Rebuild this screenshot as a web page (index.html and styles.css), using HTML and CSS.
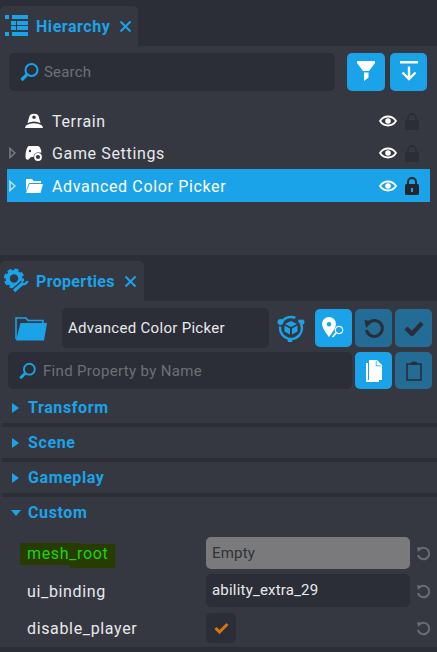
FILE: index.html
```html
<!DOCTYPE html>
<html>
<head>
	<title>Hierarchy and Properties</title>
	<link rel="stylesheet" href="styles.css">
</head>
<body>
	<div class="tab hier-tab">
		<svg class="tab-icon" width="28" height="24" viewBox="0 0 28 24">
			<path fill="#1aa3e8" d="M5 1h4v4H5zM5 18h4v4H5zM12 1h16v4H12zM11 7h5v4h-5zM17 7h11v4H17zM11 12h5v4h-5zM17 12h11v4H17zM12 18h16v4H12z"/>
		</svg>
		<span class="tab-title">Hierarchy</span>
		<svg class="tab-close" width="13" height="13" viewBox="0 0 13 13"><path d="M1.500 1.500l10 10M11.500 1.500l-10 10" stroke="#1aa3e8" stroke-width="2" fill="none"/></svg>
	</div>
	<div class="panel hier-panel">
		<div class="search-row">
			<div class="search">
				<svg width="22" height="22" viewBox="0 0 22 22"><circle cx="12.500" cy="9" r="6" stroke="#1aa3e8" stroke-width="2" fill="none"/><path d="M8 13.500L2.500 19" stroke="#1aa3e8" stroke-width="3.200"/></svg>
				<span>Search</span>
			</div>
			<div class="btn-pair">
				<div class="btn">
					<svg width="20" height="24" viewBox="0 0 20 24"><path fill="#fff" d="M1 1h18v2l-6 8H7L1 3z"/><path fill="#fff" d="M8 12.500h4.500l0 5L8 21z"/></svg>
				</div>
				<div class="btn">
					<svg width="20" height="24" viewBox="0 0 20 24"><path fill="#fff" d="M1 1h18v2.500H1z"/><path d="M10 6.500V19M3.500 12.500L10 19l6.500-6.500" stroke="#fff" stroke-width="2.400" fill="none"/></svg>
				</div>
			</div>
		</div>
		<div class="tree">
			<div class="row">
				<span class="arrow"></span>
				<svg class="row-icon" width="18" height="16" viewBox="0 0 18 16"><path fill="#fff" fill-rule="evenodd" d="M2.500 10L4.500 3C5.500 0 12.500 0 13.500 3l2 7C11 8 7 8 2.500 10zM9 2.500a1.800 1.800 0 1 0 0 3.600 1.800 1.800 0 0 0 0-3.600z"/><path fill="#fff" d="M1 12.500C6 9.500 12 9.500 17 12.500l1 2.500H0z"/></svg>
				<span class="row-name">Terrain</span>
				<svg class="eye" width="18" height="12" viewBox="0 0 18 12"><path d="M1 6c4-6 12-6 16 0-4 6-12 6-16 0z" fill="none" stroke="#fff" stroke-width="1.800"/><circle cx="9" cy="6" r="2.800" fill="#fff"/></svg>
				<svg class="lock" width="14" height="17" viewBox="0 0 14 17"><path d="M3 8V5a4 4 0 0 1 8 0v3" fill="none" stroke="#2b2e36" stroke-width="2"/><rect y="7" width="14" height="10" rx="1.500" fill="#2b2e36"/></svg>
			</div>
			<div class="row">
				<svg class="arrow-open" width="7" height="12" viewBox="0 0 7 12"><path d="M1 1.500L6 6l-5 4.500z" fill="none" stroke="#7b7e85" stroke-width="1.500"/></svg>
				<svg class="row-icon" width="18" height="16" viewBox="0 0 18 16"><path fill="#fff" d="M4 1h8.500c2 0 3.500 2.500 4 6.500L12 8l-2 4H6l-2.500 2.500C1.500 15 .5 14 .5 11.500.5 7 2 1 4 1z"/><circle cx="13" cy="12" r="4.500" fill="#353841"/><circle cx="13" cy="12" r="3" fill="none" stroke="#fff" stroke-width="1.800"/><circle cx="5" cy="6" r="1.200" fill="#353841"/></svg>
				<span class="row-name">Game Settings</span>
				<svg class="eye" width="18" height="12" viewBox="0 0 18 12"><path d="M1 6c4-6 12-6 16 0-4 6-12 6-16 0z" fill="none" stroke="#fff" stroke-width="1.800"/><circle cx="9" cy="6" r="2.800" fill="#fff"/></svg>
				<svg class="lock" width="14" height="17" viewBox="0 0 14 17"><path d="M3 8V5a4 4 0 0 1 8 0v3" fill="none" stroke="#2b2e36" stroke-width="2"/><rect y="7" width="14" height="10" rx="1.500" fill="#2b2e36"/></svg>
			</div>
			<div class="row selected">
				<svg class="arrow-open" width="7" height="12" viewBox="0 0 7 12"><path d="M1 1.500L6 6l-5 4.500z" fill="none" stroke="#bfe4f8" stroke-width="1.500"/></svg>
				<svg class="row-icon" width="18" height="14" viewBox="0 0 18 14"><path fill="#fff" d="M1 0h6l1.500 2H16v2H4L1 12z"/><path fill="#fff" d="M4.500 5H18l-2.500 9H1z"/></svg>
				<span class="row-name">Advanced Color Picker</span>
				<svg class="eye" width="18" height="12" viewBox="0 0 18 12"><path d="M1 6c4-6 12-6 16 0-4 6-12 6-16 0z" fill="none" stroke="#fff" stroke-width="1.800"/><circle cx="9" cy="6" r="2.800" fill="#fff"/></svg>
				<svg class="lock" width="14" height="18" viewBox="0 0 14 18"><path d="M3 8V5a4 4 0 0 1 8 0v3" fill="none" stroke="#23262d" stroke-width="2"/><rect y="7" width="14" height="11" rx="1.500" fill="#23262d"/><rect x="6" y="11" width="2" height="4" fill="#1aa3e8"/></svg>
			</div>
		</div>
	</div>

	<div class="tab prop-tab">
		<svg class="tab-icon" width="26" height="26" viewBox="0 0 26 26">
			<circle cx="10" cy="10.500" r="6.300" fill="none" stroke="#1aa3e8" stroke-width="4.200"/>
			<circle cx="10" cy="10.500" r="8.800" fill="none" stroke="#1aa3e8" stroke-width="2.600" stroke-dasharray="4.300 2.610"/>
			<path d="M9 24L19 15" stroke="#353841" stroke-width="6"/>
			<path d="M10 23L19 15" stroke="#1aa3e8" stroke-width="3.200"/>
			<path d="M17.500 15.500a4 4 0 0 0 6-2.500" stroke="#1aa3e8" stroke-width="2.400" fill="none"/>
		</svg>
		<span class="tab-title">Properties</span>
		<svg class="tab-close" width="13" height="13" viewBox="0 0 13 13"><path d="M1.500 1.500l10 10M11.500 1.500l-10 10" stroke="#1aa3e8" stroke-width="2" fill="none"/></svg>
	</div>
	<div class="panel prop-panel">
		<div class="name-row">
			<svg class="big-folder" width="33" height="25" viewBox="0 0 33 25"><path d="M1 23V2h10l2 2.500h15V7" fill="none" stroke="#1aa3e8" stroke-width="1.600"/><path fill="#1aa3e8" d="M5.500 7H32l-3 17.500H1z"/></svg>
			<div class="name-field">Advanced Color Picker</div>
			<svg class="cube" width="28" height="28" viewBox="0 0 28 28">
				<circle cx="14" cy="14" r="11" fill="none" stroke="#1aa3e8" stroke-width="2.400" stroke-dasharray="16 4"/>
				<circle cx="3.500" cy="8" r="3" fill="#1aa3e8"/><circle cx="25" cy="8" r="2.500" fill="#1aa3e8"/><circle cx="13" cy="26" r="2.500" fill="#1aa3e8"/>
				<path fill="#1aa3e8" d="M14 7l6 3-6 3-6-3zM7.500 11.500l5.500 3v6l-5.500-3zM20.500 11.500l-5.500 3v6l5.500-3z"/>
			</svg>
			<div class="btn">
				<svg width="28" height="26" viewBox="0 0 28 26"><path fill="#fff" fill-rule="evenodd" d="M9 2a7 7 0 0 1 7 7c0 4.500-7 13-7 13S2 13.500 2 9a7 7 0 0 1 7-7zm0 5a2.200 2.200 0 1 0 0 4.400A2.200 2.200 0 0 0 9 7z"/><circle cx="19" cy="15" r="3.700" fill="#1aa3e8" stroke="#fff" stroke-width="1.300"/><path d="M16 18l-3.500 4" stroke="#fff" stroke-width="1.600"/></svg>
			</div>
			<div class="btn off">
				<svg width="22" height="22" viewBox="0 0 22 22"><path d="M5 6.500A8 8 0 1 1 3.500 13" fill="none" stroke="#2b2e36" stroke-width="3"/><path fill="#2b2e36" d="M1.500 3l8 1.500L3 11z"/></svg>
			</div>
			<div class="btn off">
				<svg width="20" height="16" viewBox="0 0 20 16"><path d="M2 8l6 6L18 3" fill="none" stroke="#2b2e36" stroke-width="4.400"/></svg>
			</div>
		</div>
		<div class="find-row">
			<div class="search find">
				<svg width="20" height="20" viewBox="0 0 22 22"><circle cx="12.500" cy="9" r="6" stroke="#1aa3e8" stroke-width="2" fill="none"/><path d="M8 13.500L2.500 19" stroke="#1aa3e8" stroke-width="3.200"/></svg>
				<span>Find Property by Name</span>
			</div>
			<div class="btn">
				<svg width="18" height="22" viewBox="0 0 18 22"><path fill="#fff" d="M1 3h2v17h11v2H1z"/><path fill="#fff" d="M4 0h8l5 5v15H4z"/><path fill="#1aa3e8" d="M11.500 1l0 4.500H16v.7h-5.200V1z"/></svg>
			</div>
			<div class="btn off">
				<svg width="16" height="20" viewBox="0 0 16 20"><rect x="1" y="3" width="14" height="16" fill="none" stroke="#2b2e36" stroke-width="1.600"/><path fill="#2b2e36" d="M5 1h2l1-1 1 1h2v3H5z"/></svg>
			</div>
		</div>
		<div class="section"><span class="tri"></span>Transform</div>
		<div class="section"><span class="tri"></span>Scene</div>
		<div class="section"><span class="tri"></span>Gameplay</div>
		<div class="section open"><span class="tri down"></span>Custom</div>
		<div class="prop first">
			<div class="prop-label"><span class="mesh">mesh_root</span></div>
			<div class="value empty">Empty</div>
			<svg class="reset" width="15" height="15" viewBox="0 0 15 15"><path d="M3.500 3.500A5.700 5.700 0 1 1 2 9" fill="none" stroke="#6a6d75" stroke-width="2"/><path fill="#6a6d75" d="M1 1l5 1-4 4z"/></svg>
		</div>
		<div class="prop">
			<div class="prop-label">ui_binding</div>
			<div class="value">ability_extra_29</div>
			<svg class="reset" width="15" height="15" viewBox="0 0 15 15"><path d="M3.500 3.500A5.700 5.700 0 1 1 2 9" fill="none" stroke="#6a6d75" stroke-width="2"/><path fill="#6a6d75" d="M1 1l5 1-4 4z"/></svg>
		</div>
		<div class="prop">
			<div class="prop-label">disable_player</div>
			<div class="check-cell">
				<div class="check"><svg width="15" height="12" viewBox="0 0 15 12"><path d="M1.500 6l4 4L13.500 2" fill="none" stroke="#d9730f" stroke-width="3"/></svg></div>
			</div>
			<svg class="reset" width="15" height="15" viewBox="0 0 15 15"><path d="M3.500 3.500A5.700 5.700 0 1 1 2 9" fill="none" stroke="#6a6d75" stroke-width="2"/><path fill="#6a6d75" d="M1 1l5 1-4 4z"/></svg>
		</div>
	</div>
</body>
</html>
```
FILE: styles.css
```css
* { box-sizing: border-box; }
body { margin: 0; height: 652px; overflow: hidden; background: #2b2e36; font-family: Roboto, sans-serif; color: #e8e9eb; }

.tab { display: flex; align-items: center; height: 40px; margin-top: 6px; background: #353841; border-radius: 5px 5px 0 0; }
.hier-tab { width: 138px; }
.prop-tab { width: 144px; }
.tab-icon { flex: none; }
.tab-title { font-size: 16px; font-weight: 700; letter-spacing: 0.55px; color: #1aa3e8; margin-left: 8px; }
.tab-close { margin-left: 9px; }
.prop-tab .tab-icon { margin-left: 4px; }
.prop-tab .tab-title { margin-left: 6px; letter-spacing: 0.35px; }

.panel { background: #353841; }
.hier-panel { height: 209px; padding-top: 7px; }
.prop-panel { height: 346px; padding-top: 7px; }

.search-row { display: flex; padding: 0 10px 0 9px; gap: 12px; }
.search { flex: 1; display: flex; align-items: center; height: 38px; background: #2b2e36; border-radius: 5px; padding-left: 10px; gap: 3px; font-size: 15px; letter-spacing: 0.2px; color: #6e7076; }
.btn-pair { display: flex; gap: 5px; }
.btn { flex: none; display: flex; align-items: center; justify-content: center; width: 38px; height: 38px; background: #1aa3e8; border-radius: 5px; }
.btn-pair .btn + .btn { width: 37px; }
.btn.off { background: #236c95; }

.tree { margin: 14px 7px 0; }
.row { display: flex; align-items: center; height: 32px; font-size: 16px; }
.row.selected { height: 33px; background: #1aa3e8; color: #fff; }
.arrow { flex: none; width: 7px; margin-left: 2px; }
.arrow-open { flex: none; margin-left: 2px; }
.row-icon { flex: none; margin-left: 9px; }
.row-name { flex: 1; margin-left: 9px; letter-spacing: 0.65px; }
.selected .row-name { padding-top: 1px; }
.eye { flex: none; margin-right: 8px; }
.lock { flex: none; margin-right: 11px; }

.name-row { display: flex; align-items: center; height: 40px; padding-left: 15px; }
.big-folder { flex: none; }
.name-field { flex: none; width: 207px; height: 40px; margin-left: 14px; padding-left: 6px; line-height: 40px; background: #2b2e36; border-radius: 5px; font-size: 15px; letter-spacing: 0.3px; color: #e8e9eb; }
.cube { flex: none; margin-left: 8px; margin-right: 10px; }
.name-row .btn { width: 37px; margin-right: 3px; }

.find-row { display: flex; gap: 3px; margin-top: 4px; padding-left: 8px; height: 37px; }
.find { flex: none; width: 344px; height: 37px; gap: 5px; letter-spacing: 0.33px; }
.find-row .btn { width: 37px; height: 37px; }

.section { display: flex; align-items: center; height: 31px; margin-left: 2px; margin-bottom: 4px; padding-left: 10px; font-size: 16px; font-weight: 700; letter-spacing: 0.6px; color: #1aa3e8; box-shadow: 0 4px 0 #2b2e36; }
.find-row + .section { margin-top: 3px; }
.section.open { box-shadow: none; margin-bottom: 0; }
.tri { flex: none; width: 0; height: 0; margin-right: 9px; border-left: 7px solid #1aa3e8; border-top: 5px solid transparent; border-bottom: 5px solid transparent; }
.tri.down { margin-right: 7px; margin-left: -1px; border-top: 6px solid #1aa3e8; border-left: 5px solid transparent; border-right: 5px solid transparent; border-bottom: 0; }

.prop { display: flex; align-items: center; height: 37px; }
.prop.first { height: 36px; margin-top: 7px; margin-bottom: 1px; }
.prop-label { flex: none; width: 206px; padding-left: 27px; font-size: 16px; letter-spacing: 0.65px; }
.prop + .prop .prop-label { padding-top: 2px; }
.prop + .prop .reset { margin-top: 2px; }
.mesh { position: relative; z-index: 0; display: inline-block; color: #22d400; }
.mesh::before { content: ""; position: absolute; z-index: -1; left: -7px; top: -1px; width: 59px; height: 22px; background: #263c00; }
.mesh::after { content: ""; position: absolute; z-index: -1; left: 43px; top: 0; width: 45px; height: 24px; background: #263c00; }
.value { flex: none; width: 204px; height: 33px; padding-left: 6px; line-height: 33px; background: #2b2e36; border-radius: 5px; font-size: 15px; letter-spacing: 0.2px; }
.value.empty { height: 32px; line-height: 32px; background: #7a7a7c; color: #2f3238; }
.check-cell { flex: none; width: 204px; }
.check { display: flex; align-items: center; justify-content: center; width: 30px; height: 30px; background: #2b2e36; border-radius: 5px; }
.reset { flex: none; margin-left: 6px; }
```
